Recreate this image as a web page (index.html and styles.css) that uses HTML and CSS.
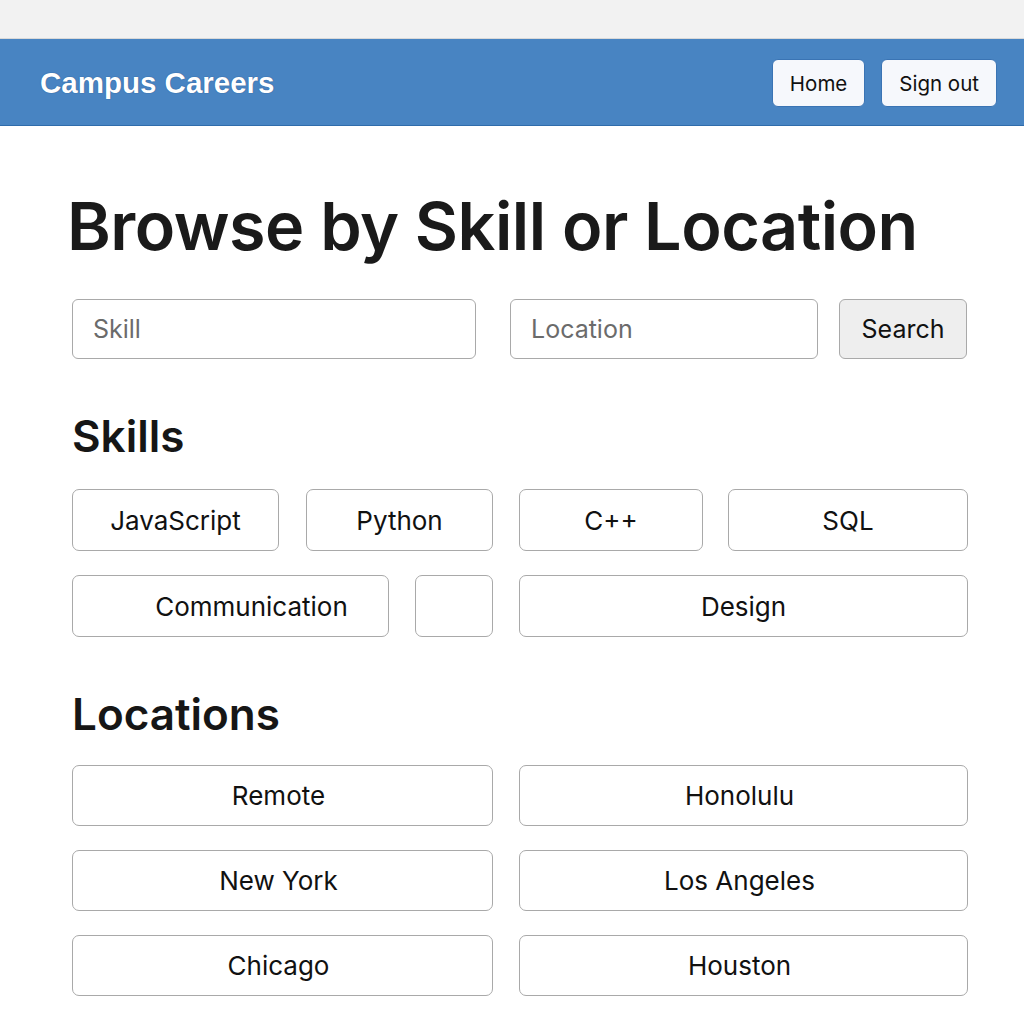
FILE: index.html
```html
<!DOCTYPE html>
<html lang="en">
<head>
<meta charset="utf-8">
<title>Campus Careers</title>
<link rel="stylesheet" href="styles.css">
</head>
<body>
<div class="chrome"></div>
<header class="topbar">
  <a class="brand" href="#">Campus Careers</a>
  <nav class="nav">
    <a class="nav-btn" href="#">Home</a>
    <a class="nav-btn" href="#">Sign out</a>
  </nav>
</header>
<main class="page">
  <h1 class="title">Browse by Skill or Location</h1>
  <form class="search">
    <input class="field field-skill" type="text" placeholder="Skill">
    <input class="field field-loc" type="text" placeholder="Location">
    <button class="search-btn" type="button">Search</button>
  </form>

  <h2 class="section">Skills</h2>
  <div class="halves skills">
    <div class="row">
      <a class="chip w-js" href="#">JavaScript</a>
      <a class="chip grow" href="#">Python</a>
    </div>
    <div class="row gap25">
      <a class="chip w-cpp" href="#">C++</a>
      <a class="chip grow" href="#">SQL</a>
    </div>
    <div class="row gap26">
      <a class="chip w-comm" href="#">Communication</a>
      <a class="chip grow" href="#"></a>
    </div>
    <div class="row">
      <a class="chip grow" href="#">Design</a>
    </div>
  </div>

  <h2 class="section section-loc">Locations</h2>
  <div class="halves locations">
    <a class="chip" href="#">Remote</a>
    <a class="chip" href="#">Honolulu</a>
    <a class="chip" href="#">New York</a>
    <a class="chip" href="#">Los Angeles</a>
    <a class="chip" href="#">Chicago</a>
    <a class="chip" href="#">Houston</a>
  </div>
</main>
</body>
</html>
```

FILE: styles.css
```css
* { box-sizing: border-box; }
html, body { margin: 0; padding: 0; background: #ffffff; }
body {
  font-family: Inter, "Noto Sans", "Liberation Sans", sans-serif;
  color: #111111;
}

.chrome {
  height: 39px;
  background: #f2f2f2;
  border-bottom: 1px solid #d9d9d9;
}

.topbar {
  height: 87px;
  background: #4884c2;
  border-bottom: 1px solid #2f6cab;
  display: flex;
  align-items: center;
  justify-content: space-between;
  padding: 0 27px 0 40px;
}
.brand {
  font-family: "Liberation Sans", Arial, sans-serif;
  font-weight: 700;
  font-size: 29.5px;
  color: #ffffff;
  text-decoration: none;
  text-shadow: 0 0 1px rgba(20, 60, 120, 0.9);
  margin-top: 2px;
}
.nav { display: flex; gap: 16px; margin-top: 2px; }
.nav-btn {
  height: 48px;
  display: flex;
  align-items: center;
  padding: 0 17px;
  background: #f6f8fc;
  border: 1px solid #3a74b4;
  border-radius: 6px;
  color: #111111;
  text-decoration: none;
  font-size: 20.5px;
}

.page {
  padding: 0 57px 40px 72px;
}
.title {
  margin: 60px 0 0 -5px;
  font-size: 66.5px;
  font-weight: 600;
  letter-spacing: -0.5px;
  line-height: 80px;
  color: #1a1a1a;
}

.search {
  display: flex;
  margin-top: 33px;
  height: 60px;
}
.field {
  height: 60px;
  border: 1px solid #a9a9a9;
  border-radius: 6px;
  padding: 0 20px;
  font: inherit;
  font-size: 25px;
  color: #222;
  background: #fff;
}
.field::placeholder { color: #6b6b6b; }
.field-skill { width: 404px; }
.field-loc { width: 308px; margin-left: 34px; }
.search-btn {
  margin-left: 21px;
  width: 130px;
  height: 60px;
  border: 1px solid #a9a9a9;
  border-radius: 6px;
  background: #eeeeee;
  font: inherit;
  font-size: 25px;
  color: #111;
}

.section {
  margin: 50px 0 0 0;
  font-size: 44px;
  font-weight: 600;
  line-height: 54px;
  color: #161616;
}
.section-loc { margin-top: 50px; }

.halves {
  display: grid;
  grid-template-columns: 421px 449px;
  column-gap: 26px;
}
.skills { margin-top: 26px; row-gap: 24px; }
.locations { margin-top: 24px; row-gap: 24px; }

.row { display: flex; gap: 27px; }
.row.gap25 { gap: 25px; }
.row.gap26 { gap: 26px; }

.chip {
  height: 62px;
  display: flex;
  align-items: center;
  justify-content: center;
  border: 1px solid #a9a9a9;
  border-radius: 7px;
  background: #fff;
  color: #111111;
  text-decoration: none;
  font-size: 26px;
}
.locations .chip { height: 61px; padding-right: 8px; }
.grow { flex: 1; }
.w-js { width: 207px; }
.w-cpp { width: 184px; }
.w-comm { width: 317px; padding-left: 42px; }
```
